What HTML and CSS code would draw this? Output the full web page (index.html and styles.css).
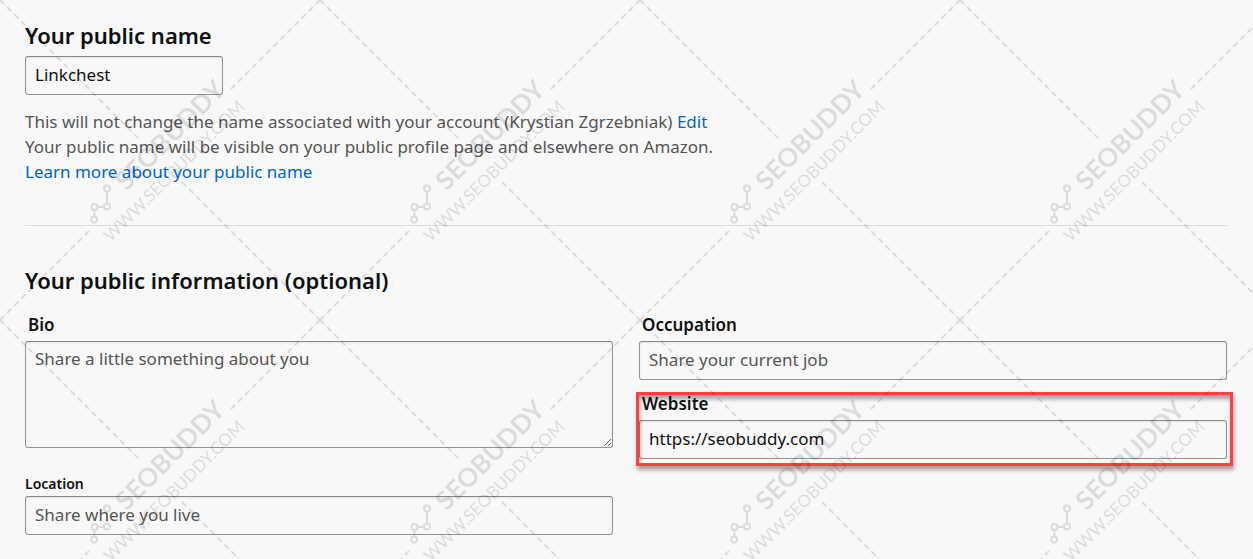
FILE: index.html
```html
<!DOCTYPE html>
<html lang="en">
<head>
<meta charset="utf-8">
<meta name="viewport" content="width=device-width, initial-scale=1">
<title>Your public profile</title>
<link rel="stylesheet" href="styles.css">
</head>
<body>
<main class="page">
  <section class="name-section">
    <h2 class="heading"><label for="public-name">Your public name</label></h2>
    <input class="control control-short" id="public-name" type="text" value="Linkchest">
    <p class="help">
      This will not change the name associated with your account (Krystian Zgrzebniak) <a href="#">Edit</a><br>
      Your public name will be visible on your public profile page and elsewhere on Amazon.<br>
      <a href="#">Learn more about your public name</a>
    </p>
  </section>
  <section class="info-section">
    <h2 class="heading">Your public information (optional)</h2>
    <div class="columns">
      <div class="column">
        <div class="field">
          <label class="label" for="bio">Bio</label>
          <textarea class="control control-area" id="bio" placeholder="Share a little something about you"></textarea>
        </div>
        <div class="field field-location">
          <label class="label label-small" for="location">Location</label>
          <input class="control" id="location" type="text" placeholder="Share where you live">
        </div>
      </div>
      <div class="column">
        <div class="field">
          <label class="label" for="occupation">Occupation</label>
          <input class="control" id="occupation" type="text" placeholder="Share your current job">
        </div>
        <div class="field field-marked">
          <label class="label" for="website">Website</label>
          <input class="control" id="website" type="text" value="https://seobuddy.com">
        </div>
      </div>
    </div>
  </section>
</main>
<svg class="watermark" aria-hidden="true">
  <defs>
    <pattern id="mark" width="320" height="320" patternUnits="userSpaceOnUse">
      <g class="mark-lines">
        <path d="M0 0L138 138M182 182L320 320M320 0L231 89M0 320L89 231"/>
      </g>
      <g class="mark-logo">
        <path d="M107 191.500V203.500M104 207H98M94.300 210V217"/>
        <circle cx="107" cy="188.500" r="3"/>
        <circle cx="107" cy="206.500" r="3"/>
        <circle cx="94.500" cy="207" r="3"/>
        <circle cx="94" cy="219.500" r="3"/>
      </g>
      <g transform="rotate(-45)">
        <text class="mark-name" x="-46" y="225">SEOBUDDY</text>
        <text class="mark-url" x="-93" y="250">WWW.SEOBUDDY.COM</text>
      </g>
    </pattern>
  </defs>
  <rect width="100%" height="100%" fill="url(#mark)"/>
</svg>
</body>
</html>
```
FILE: styles.css
```css
* {
  box-sizing: border-box;
}

body {
  margin: 0;
  background: #f8f8f8;
  color: #0f1111;
  font-family: "Noto Sans", "Open Sans", sans-serif;
  font-size: 17px;
  line-height: 25px;
}

.page {
  padding: 19px 26px 24px 25px;
}

.heading {
  margin: 0;
  font-size: 22px;
  line-height: 32px;
  font-weight: 600;
}

.name-section {
  padding-bottom: 41px;
  border-bottom: 1px solid #ddd;
}

.name-section .heading {
  margin-bottom: 5px;
}

.control {
  display: block;
  width: 100%;
  height: 39px;
  padding: 0 9px 2px;
  border: 1px solid #949494;
  border-top-color: #888;
  border-radius: 3px;
  background: transparent;
  box-shadow: inset 0 1px 2px rgba(0, 0, 0, 0.08);
  color: #0f1111;
  font: inherit;
}

.control::placeholder {
  color: #555;
  opacity: 1;
}

.control-short {
  width: 198px;
}

.control-area {
  height: 107px;
  padding: 4px 9px;
  resize: vertical;
}

.help {
  margin: 14px 0 0;
  color: #555;
}

a {
  color: #0066c0;
  text-decoration: none;
}

.info-section {
  padding-top: 38px;
}

.columns {
  display: grid;
  grid-template-columns: 1fr 1fr;
  gap: 26px;
  padding-top: 17px;
}

.column {
  display: flex;
  flex-direction: column;
  gap: 12px;
}

.label {
  display: block;
  padding: 0 3px 4px;
  line-height: 24px;
  font-weight: 600;
}

.label-small {
  padding: 0 0 2px;
  font-size: 14px;
  line-height: 20px;
}

.field-location {
  padding-top: 14px;
}

.field-marked {
  position: relative;
}

.field-marked::after {
  content: "";
  position: absolute;
  inset: 0 -6px -7px -3px;
  border: 3px solid #fb4141;
  box-shadow: 1px 4px 4px rgba(0, 0, 0, 0.35), inset 1px 4px 4px rgba(0, 0, 0, 0.35);
  pointer-events: none;
}

.watermark {
  position: absolute;
  inset: 0;
  width: 100%;
  height: 100%;
  opacity: 0.11;
  pointer-events: none;
}

.mark-lines,
.mark-logo {
  fill: none;
  stroke: #000;
  stroke-width: 2;
}

.mark-lines {
  stroke-dasharray: 6 4;
}

.mark-name,
.mark-url {
  fill: #000;
  font-family: Lato, sans-serif;
}

.mark-name {
  font-size: 26px;
  font-weight: 700;
}

.mark-url {
  font-size: 17px;
}
```
